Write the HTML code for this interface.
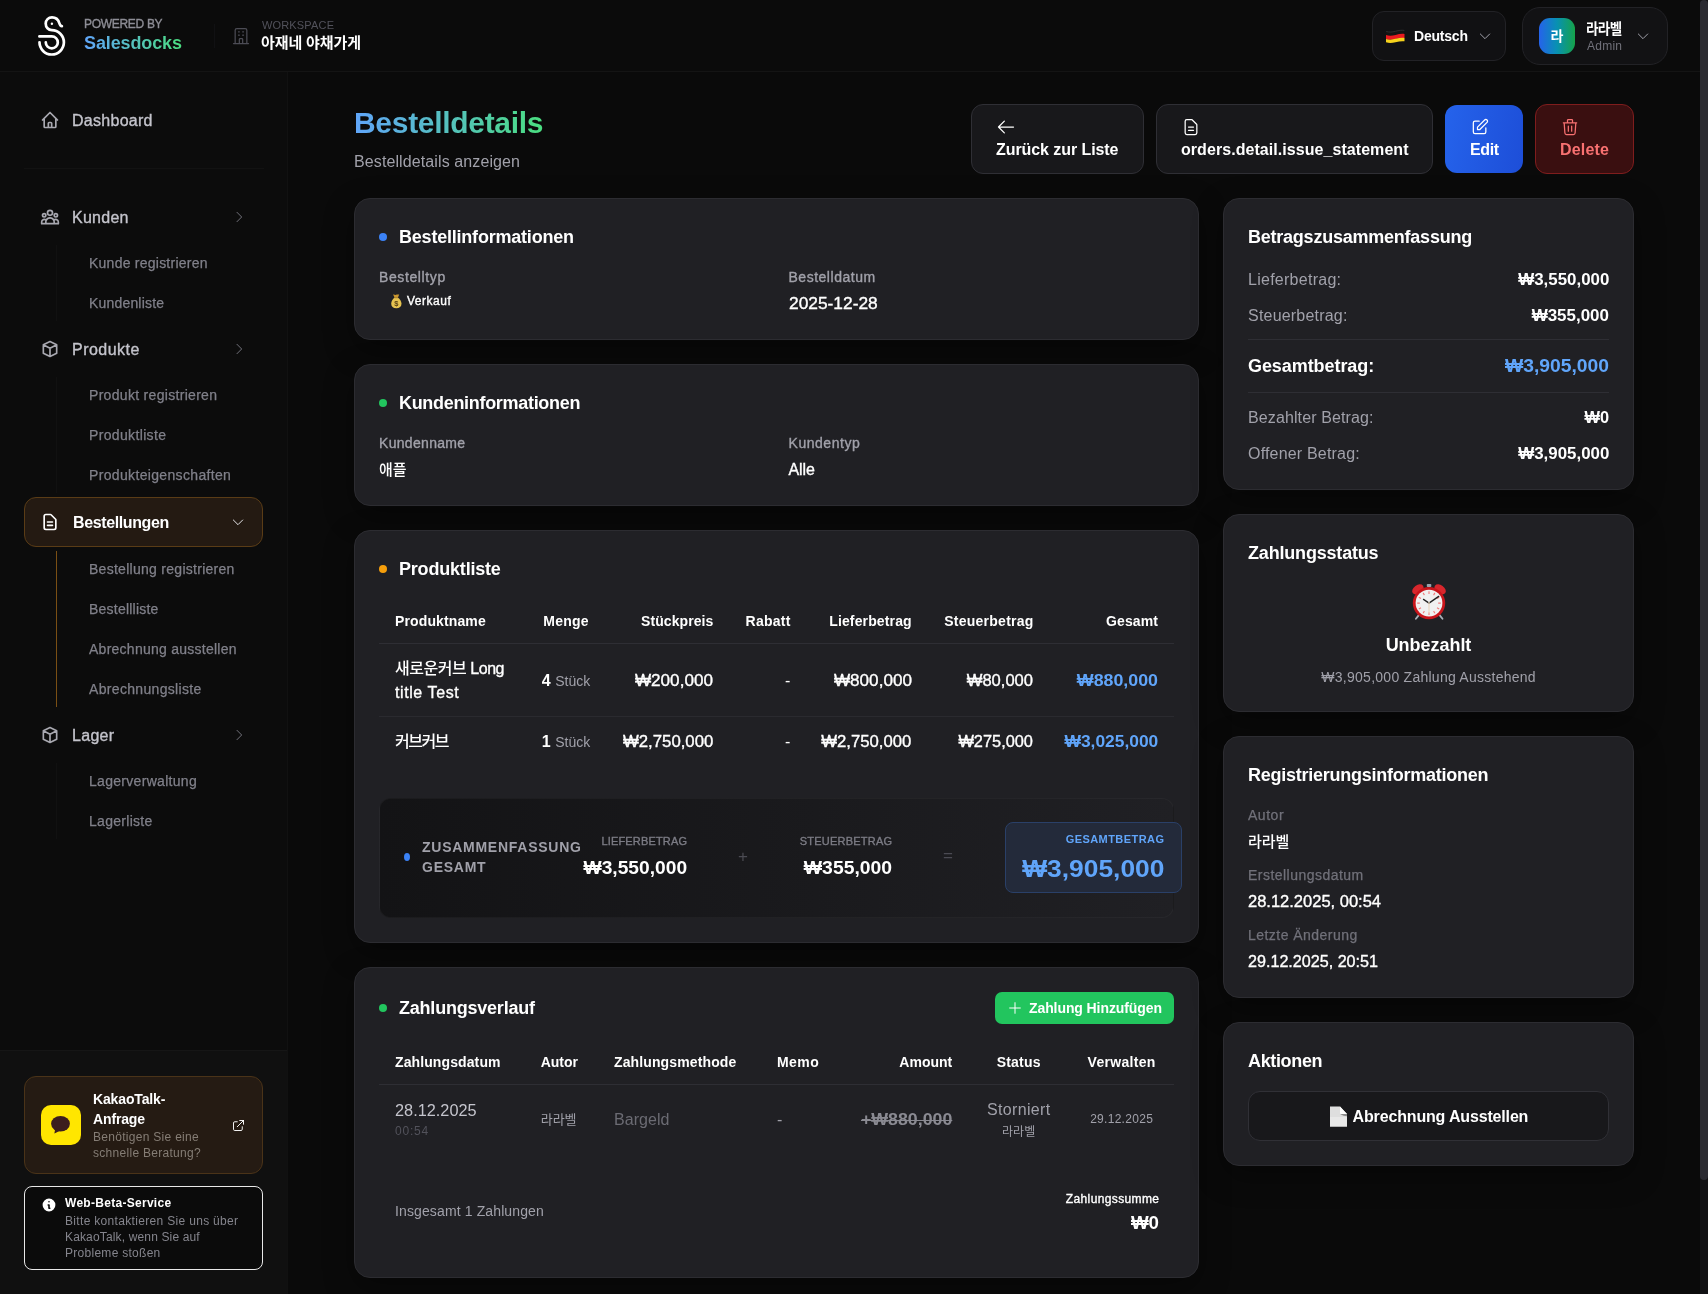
<!DOCTYPE html>
<html lang="de">
<head>
<meta charset="utf-8">
<title>Bestelldetails</title>
<style>
*{box-sizing:border-box;margin:0;padding:0}
html,body{width:1708px;height:1294px;overflow:hidden;background:#0a0a0a}
body{font-family:"Liberation Sans","Noto Sans CJK KR",sans-serif;color:#fff;position:relative;-webkit-font-smoothing:antialiased;will-change:transform}
svg{display:block}
.ico{fill:none;stroke:currentColor;stroke-width:1.5;stroke-linecap:round;stroke-linejoin:round}
b,.sb{font-weight:700}
#t_pow{letter-spacing:-0.307px !important;margin-right:0.307px;}
#t_sd{letter-spacing:-0.118px !important;margin-right:0.118px;}
#t_ws{letter-spacing:0.162px !important;margin-right:-0.162px;}
#t_wsn{letter-spacing:-0.112px !important;margin-right:0.112px;}
#t_de{letter-spacing:-0.206px !important;margin-right:0.206px;}
#t_un{letter-spacing:-0.633px !important;margin-right:0.633px;}
#t_ad{letter-spacing:0.246px !important;margin-right:-0.246px;}
#s_dash{letter-spacing:0.277px !important;margin-right:-0.277px;}
#s_kun{letter-spacing:0.266px !important;margin-right:-0.266px;}
#s_k1{letter-spacing:0.241px !important;margin-right:-0.241px;}
#s_k2{letter-spacing:0.183px !important;margin-right:-0.183px;}
#s_pro{letter-spacing:0.465px !important;margin-right:-0.465px;}
#s_p1{letter-spacing:0.307px !important;margin-right:-0.307px;}
#s_p2{letter-spacing:0.349px !important;margin-right:-0.349px;}
#s_p3{letter-spacing:0.340px !important;margin-right:-0.340px;}
#s_best{letter-spacing:-0.388px !important;margin-right:0.388px;}
#s_b1{letter-spacing:0.277px !important;margin-right:-0.277px;}
#s_b2{letter-spacing:0.225px !important;margin-right:-0.225px;}
#s_b3{letter-spacing:0.253px !important;margin-right:-0.253px;}
#s_b4{letter-spacing:0.326px !important;margin-right:-0.326px;}
#s_lag{letter-spacing:0.295px !important;margin-right:-0.295px;}
#s_l1{letter-spacing:0.299px !important;margin-right:-0.299px;}
#s_l2{letter-spacing:0.289px !important;margin-right:-0.289px;}
#s_kk{letter-spacing:-0.141px !important;}
#s_kd{letter-spacing:0.291px !important;}
#s_wb{letter-spacing:0.285px !important;margin-right:-0.285px;}
#s_wd1{letter-spacing:0.322px !important;margin-right:-0.322px;}
#s_wd2{letter-spacing:0.149px !important;margin-right:-0.149px;}
#s_wd3{letter-spacing:0.279px !important;margin-right:-0.279px;}
#m_h1{letter-spacing:-0.302px !important;margin-right:0.302px;}
#m_h2{letter-spacing:0.106px !important;margin-right:-0.106px;}
#b_1{letter-spacing:-0.072px !important;margin-right:0.072px;}
#b_2{letter-spacing:0.058px !important;margin-right:-0.058px;}
#b_3{letter-spacing:-0.406px !important;margin-right:0.406px;}
#b_4{letter-spacing:0.194px !important;margin-right:-0.194px;}
#c1_t{letter-spacing:-0.212px !important;margin-right:0.212px;}
#c1_a{letter-spacing:0.611px !important;margin-right:-0.611px;}
#c1_b{letter-spacing:0.516px !important;margin-right:-0.516px;}
#c1_c{letter-spacing:0.515px !important;margin-right:-0.515px;}
#c1_d{display:inline-block;letter-spacing:0 !important;transform:scaleX(1.0838);transform-origin:0% 50%}
#c2_t{letter-spacing:-0.311px !important;margin-right:0.311px;}
#c2_a{letter-spacing:0.311px !important;margin-right:-0.311px;}
#c2_c{letter-spacing:0.543px !important;margin-right:-0.543px;}
#c2_d{letter-spacing:-0.062px !important;margin-right:0.062px;}
#c3_t{letter-spacing:-0.194px !important;margin-right:0.194px;}
#p_h1{letter-spacing:0.123px !important;margin-right:-0.123px;}
#p_h2{letter-spacing:0.239px !important;margin-right:-0.239px;}
#p_h3{letter-spacing:0.078px !important;margin-right:-0.078px;}
#p_h4{letter-spacing:0.247px !important;margin-right:-0.247px;}
#p_h5{letter-spacing:0.143px !important;margin-right:-0.143px;}
#p_h6{letter-spacing:0.249px !important;margin-right:-0.249px;}
#p_h7{letter-spacing:0.128px !important;margin-right:-0.128px;}
#p_a1{letter-spacing:-0.462px !important;margin-right:0.462px;}
#p_a1b{letter-spacing:0.588px !important;margin-right:-0.588px;}
#p_a3{display:inline-block;letter-spacing:0 !important;transform:scaleX(1.0694);transform-origin:100% 50%}
#p_a5{display:inline-block;letter-spacing:0 !important;transform:scaleX(1.0694);transform-origin:100% 50%}
#p_a6{display:inline-block;letter-spacing:0 !important;transform:scaleX(1.0352);transform-origin:100% 50%}
#p_a7{display:inline-block;letter-spacing:0 !important;transform:scaleX(1.1119);transform-origin:100% 50%}
#p_b1{letter-spacing:-1.430px !important;margin-right:1.430px;}
#p_b3{display:inline-block;letter-spacing:0 !important;transform:scaleX(1.0466);transform-origin:100% 50%}
#p_b5{display:inline-block;letter-spacing:0 !important;transform:scaleX(1.0431);transform-origin:100% 50%}
#p_b6{display:inline-block;letter-spacing:0 !important;transform:scaleX(1.0214);transform-origin:100% 50%}
#p_b7{display:inline-block;letter-spacing:0 !important;transform:scaleX(1.0871);transform-origin:100% 50%}
#z_t{letter-spacing:0.738px !important;}
#z_l1{letter-spacing:0.168px !important;margin-right:-0.168px;}
#z_v1{display:inline-block;letter-spacing:0 !important;transform:scaleX(1.0662);transform-origin:100% 50%}
#z_l2{letter-spacing:0.213px !important;margin-right:-0.213px;}
#z_v2{display:inline-block;letter-spacing:0 !important;transform:scaleX(1.0748);transform-origin:100% 50%}
#z_l3{letter-spacing:0.436px !important;margin-right:-0.436px;}
#z_v3{display:inline-block;letter-spacing:0 !important;transform:scaleX(1.0987);transform-origin:100% 50%}
#c4_t{letter-spacing:-0.217px !important;margin-right:0.217px;}
#c4_b{letter-spacing:-0.090px !important;margin-right:0.090px;}
#q_h1{letter-spacing:0.105px !important;margin-right:-0.105px;}
#q_h2{letter-spacing:-0.032px !important;margin-right:0.032px;}
#q_h3{letter-spacing:0.124px !important;margin-right:-0.124px;}
#q_h4{letter-spacing:0.449px !important;margin-right:-0.449px;}
#q_h5{letter-spacing:0.022px !important;margin-right:-0.022px;}
#q_h6{letter-spacing:0.201px !important;margin-right:-0.201px;}
#q_h7{letter-spacing:0.303px !important;margin-right:-0.303px;}
#q_a1{display:inline-block;letter-spacing:0 !important;transform:scaleX(1.0190);transform-origin:0% 50%}
#q_a3{letter-spacing:0.057px !important;margin-right:-0.057px;}
#q_a5{display:inline-block;letter-spacing:0 !important;transform:scaleX(1.1096);transform-origin:100% 50%}
#q_a6{letter-spacing:0.341px !important;margin-right:-0.341px;}
#q_a7{letter-spacing:0.293px !important;margin-right:-0.293px;}
#q_f1{letter-spacing:0.124px !important;margin-right:-0.124px;}
#q_f2{letter-spacing:0.373px !important;margin-right:-0.373px;}
#q_f3{display:inline-block;letter-spacing:0 !important;transform:scaleX(1.0407);transform-origin:100% 50%}
#r1_t{letter-spacing:-0.232px !important;margin-right:0.232px;}
#r1_k1{letter-spacing:0.263px !important;margin-right:-0.263px;}
#r1_v1{display:inline-block;letter-spacing:0 !important;transform:scaleX(1.0547);transform-origin:100% 50%}
#r1_k2{letter-spacing:0.204px !important;margin-right:-0.204px;}
#r1_v2{display:inline-block;letter-spacing:0 !important;transform:scaleX(1.0598);transform-origin:100% 50%}
#r1_k3{letter-spacing:-0.071px !important;margin-right:0.071px;}
#r1_v3{display:inline-block;letter-spacing:0 !important;transform:scaleX(1.0723);transform-origin:100% 50%}
#r1_k4{letter-spacing:0.111px !important;margin-right:-0.111px;}
#r1_v4{display:inline-block;letter-spacing:0 !important;transform:scaleX(1.0208);transform-origin:100% 50%}
#r1_k5{letter-spacing:0.185px !important;margin-right:-0.185px;}
#r1_v5{display:inline-block;letter-spacing:0 !important;transform:scaleX(1.0547);transform-origin:100% 50%}
#r2_t{letter-spacing:-0.186px !important;margin-right:0.186px;}
#r2_a{letter-spacing:-0.039px !important;margin-right:0.039px;}
#r2_b{letter-spacing:0.259px !important;margin-right:-0.259px;}
#r3_t{letter-spacing:-0.251px !important;margin-right:0.251px;}
#r3_a{letter-spacing:0.533px !important;margin-right:-0.533px;}
#r3_b{letter-spacing:0.469px !important;margin-right:-0.469px;}
#r3_c{display:inline-block;letter-spacing:0 !important;transform:scaleX(1.0309);transform-origin:0% 50%}
#r3_d{letter-spacing:0.468px !important;margin-right:-0.468px;}
#r3_e{display:inline-block;letter-spacing:0 !important;transform:scaleX(1.0076);transform-origin:0% 50%}
#r4_t{letter-spacing:-0.345px !important;margin-right:0.345px;}
#r4_b{letter-spacing:-0.159px !important;margin-right:0.159px;}
/* header */
#hdr{position:absolute;left:0;top:0;width:1700px;height:72px;background:#0b0b0b;border-bottom:1px solid #141414}
#hdr .abs{position:absolute;white-space:nowrap}
/* sidebar */
#side{position:absolute;left:0;top:72px;width:288px;height:1222px;background:#0c0c0c;border-right:1px solid #111}
#side .it{position:absolute;left:24px;width:239px;height:50px;display:flex;align-items:center;color:#c4c4cc;font-size:16px;border-radius:12px;border:1px solid transparent}
#side .it svg.mi{position:absolute;left:15px;top:14px;width:20px;height:20px;stroke-width:2;color:#a8a8b0}
#side .it .t{position:absolute;left:47px;top:0;line-height:50px;white-space:nowrap}
#side .it svg.ch{position:absolute;left:205.5px;top:16px;width:16px;height:16px;color:#71717a}
#side .sub{position:absolute;left:89px;font-size:14px;line-height:20px;color:#80808a;white-space:nowrap;font-weight:500;-webkit-text-stroke:.25px currentColor}
#side .vl{position:absolute;left:56px;width:1px;background:#111}
/* scrollbar */
#sbt{position:absolute;left:1700px;top:0;width:8px;height:1294px;background:#121214}
#sbh{position:absolute;left:1700px;top:0;width:8px;height:1180px;background:#2b2b31;border-radius:4px}
/* main */
.card{position:absolute;background:#202024;border:1px solid #2c2c31;border-radius:16px;padding:24px;box-shadow:0 10px 30px rgba(0,0,0,.35)}
.ct{font-size:18px;line-height:28px;font-weight:700;white-space:nowrap;display:flex;align-items:center}
.dot{width:8px;height:8px;border-radius:50%;margin-right:12px;flex:none}
.lbl{font-size:14px;line-height:20px;color:#a1a1aa;white-space:nowrap}
.val{font-size:16px;line-height:24px;margin-top:4px;white-space:nowrap;position:relative;top:1px}
.row{display:flex;justify-content:space-between;align-items:center;font-size:16px;line-height:24px;white-space:nowrap}
.row .k{color:#a1a1aa}
.row.n span{position:relative;top:1px}
.ko{font-weight:500;font-size:15px}
.ml{font-weight:500;-webkit-text-stroke:.25px currentColor}
.md{font-weight:500;-webkit-text-stroke:.35px currentColor}
.row .v{font-weight:700}
table{border-collapse:collapse;table-layout:fixed;width:795px}
th{font-size:14px;line-height:20px;font-weight:700;padding:12px 16px;text-align:left;white-space:nowrap;border-bottom:1px solid #2e2e34}
td{font-size:16px;line-height:24px;padding:13px 16px 11px;white-space:nowrap}
.r{text-align:right}.c{text-align:center}
.blue{color:#60a5fa}
.btn{position:absolute;top:104px;height:70px;border-radius:12px;border:1px solid #2f2f35;background:#18181b;font-size:16px;font-weight:700;line-height:24px;white-space:nowrap}
.btn svg{position:absolute;left:24px;top:12px;width:20px;height:20px}
.btn span{position:absolute;left:24px;top:33px}
</style>
</head>
<body>
<div id="hdr">
 <svg class="abs" style="left:0;top:0" width="80" height="72" viewBox="0 0 80 72" fill="none" stroke="#fff" stroke-width="2.700" stroke-linecap="round" stroke-linejoin="round">
  <path d="M61.900 26.200C60.300 26.100 59.700 24.400 59.200 22.800C58.2 19.5 55.5 17.3 52 17.3A6.3 6.3 0 0 0 45.7 23.6C45.7 27.5 48.5 30.1 51.7 30.1A12.2 12.2 0 1 1 39.5 42.3"/>
  <path d="M39.400 36.400H51.800A6 6 0 1 1 45.8 42.4"/>
  <circle cx="51.9" cy="23.8" r="1.2" fill="#fff" stroke="none"/>
 </svg>
 <div id="t_pow" class="abs md" style="left:84px;top:16px;font-size:12px;line-height:16px;color:#8e8e96;letter-spacing:.3px">POWERED BY</div>
 <div class="abs" id="t_sd" style="left:84px;top:28.500px;font-size:18px;line-height:28px;font-weight:700;background:linear-gradient(90deg,#60a5fa,#4ade80);-webkit-background-clip:text;background-clip:text;color:transparent">Salesdocks</div>
 <div class="abs" style="left:214px;top:24px;width:1px;height:24px;background:#111113"></div>
 <svg class="abs ico" style="left:231px;top:26px;color:#4c4c55" width="20" height="20" viewBox="0 0 24 24" stroke-width="2"><path d="M19 21V5a2 2 0 00-2-2H7a2 2 0 00-2 2v16m14 0h2m-2 0h-5m-9 0H3m2 0h5M9 7h1m-1 4h1m4-4h1m-1 4h1m-5 10v-5a1 1 0 011-1h2a1 1 0 011 1v5m-4 0h4"/></svg>
 <div class="abs" id="t_ws" style="left:262px;top:17px;font-size:11px;line-height:16px;color:#52525b;letter-spacing:.6px">WORKSPACE</div>
 <div class="abs" id="t_wsn" style="left:261px;top:31px;font-size:15px;line-height:24px;font-weight:700">아재네 야채가게</div>

 <div class="abs" style="left:1372px;top:11px;width:134px;height:50px;border-radius:12px;background:#111113;border:1px solid #222226"></div>
 <svg class="abs" style="left:1385px;top:28.600px" width="21" height="15" preserveAspectRatio="none" viewBox="0 0 21 16"><path d="M1 2.300C4 3.400 7 3.200 10.500 2.200S17 .8 19.500 1.200V5.500C17 5.100 14 5.500 10.500 6.500S4 7.700 1 6.600Z" fill="#141414"/><path d="M1.200 2.600C4 3.600 7 3.400 10.500 2.400S17 1.100 19.300 1.500" stroke="#3a3a3a" stroke-width=".7" fill="none"/><path d="M1 6.400C4 7.500 7 7.300 10.500 6.300S17 4.900 19.500 5.300V9.700C17 9.300 14 9.700 10.500 10.700S4 11.900 1 10.800Z" fill="#ea1a1f"/><path d="M1 10.600C4 11.700 7 11.500 10.500 10.500S17 9.100 19.500 9.500V13.100C17 12.700 14 13.100 10.500 14.100S4 15.300 1 14.200Z" fill="#f6d21c"/></svg>
 <div class="abs" id="t_de" style="left:1414px;top:24px;font-size:14px;line-height:24px;font-weight:700">Deutsch</div>
 <svg class="abs ico" style="left:1477px;top:28px;color:#a1a1aa" width="16" height="16" viewBox="0 0 24 24" stroke-width="2"><path d="M19 9l-7 7-7-7"/></svg>

 <div class="abs" style="left:1522px;top:7px;width:146px;height:58px;border-radius:18px;background:#121214;border:1px solid #222226"></div>
 <div class="abs" style="left:1539px;top:18px;width:36px;height:36px;border-radius:11px;background:linear-gradient(90deg,#2563eb,#0891b2 50%,#16a34a);font-size:14px;line-height:36px;font-weight:700;text-align:center">라</div>
 <div class="abs" id="t_un" style="left:1586px;top:18.500px;font-size:15px;transform:scaleX(.9);transform-origin:0 0;line-height:20px;font-weight:700">라라벨</div>
 <div class="abs" id="t_ad" style="left:1587px;top:38px;font-size:12px;line-height:16px;color:#71717a">Admin</div>
 <svg class="abs ico" style="left:1634.500px;top:28px;color:#a1a1aa" width="16" height="16" viewBox="0 0 24 24" stroke-width="2"><path d="M19 9l-7 7-7-7"/></svg>
</div>

<div id="side">
 <div class="it" style="top:23px"><svg class="mi ico" viewBox="0 0 24 24"><path d="M3 12l2-2m0 0l7-7 7 7M5 10v10a1 1 0 001 1h3m10-11l2 2m-2-2v10a1 1 0 01-1 1h-3m-6 0a1 1 0 001-1v-4a1 1 0 011-1h2a1 1 0 011 1v4a1 1 0 001 1m-6 0h6"/></svg><span class="t md" id="s_dash">Dashboard</span></div>
 <div style="position:absolute;left:24px;top:96px;width:240px;height:1px;background:#121212"></div>

 <div class="it" style="top:120px"><svg class="mi ico" viewBox="0 0 24 24"><path d="M17 20h5v-2a3 3 0 00-5.356-1.857M17 20H7m10 0v-2c0-.656-.126-1.283-.356-1.857M7 20H2v-2a3 3 0 015.356-1.857M7 20v-2c0-.656.126-1.283.356-1.857m0 0a5.002 5.002 0 019.288 0M15 7a3 3 0 11-6 0 3 3 0 016 0zm6 3a2 2 0 11-4 0 2 2 0 014 0zM7 10a2 2 0 11-4 0 2 2 0 014 0z"/></svg><span class="t md" id="s_kun">Kunden</span><svg class="ch ico" viewBox="0 0 24 24" stroke-width="2"><path d="M9 5l7 7-7 7"/></svg></div>
 <div class="vl" style="top:173px;height:76px"></div>
 <div class="sub" id="s_k1" style="top:181px">Kunde registrieren</div>
 <div class="sub" id="s_k2" style="top:221px">Kundenliste</div>

 <div class="it" style="top:252px"><svg class="mi ico" viewBox="0 0 24 24"><path d="M20 7l-8-4-8 4m16 0l-8 4m8-4v10l-8 4m0-10L4 7m8 4v10M4 7v10l8 4"/></svg><span class="t md" id="s_pro">Produkte</span><svg class="ch ico" viewBox="0 0 24 24" stroke-width="2"><path d="M9 5l7 7-7 7"/></svg></div>
 <div class="vl" style="top:305px;height:116px"></div>
 <div class="sub" id="s_p1" style="top:313px">Produkt registrieren</div>
 <div class="sub" id="s_p2" style="top:353px">Produktliste</div>
 <div class="sub" id="s_p3" style="top:393px">Produkteigenschaften</div>

 <div class="it" style="top:425px;background:#241a12;border-color:#5a3c16;color:#fff"><svg class="mi ico" style="left:15.400px;color:#fff" viewBox="0 0 24 24"><path d="M9 12h6m-6 4h6m2 5H7a2 2 0 01-2-2V5a2 2 0 012-2h5.586a1 1 0 01.707.293l5.414 5.414a1 1 0 01.293.707V19a2 2 0 01-2 2z"/></svg><span class="t sb" id="s_best" style="left:48px">Bestellungen</span><svg class="ch ico" style="color:#e4e4e7;left:204.500px" viewBox="0 0 24 24" stroke-width="2"><path d="M19 9l-7 7-7-7"/></svg></div>
 <div style="position:absolute;left:56px;top:479px;width:1px;height:156px;background:#7a4f14"></div>
 <div class="sub" id="s_b1" style="top:487px">Bestellung registrieren</div>
 <div class="sub" id="s_b2" style="top:527px">Bestellliste</div>
 <div class="sub" id="s_b3" style="top:567px">Abrechnung ausstellen</div>
 <div class="sub" id="s_b4" style="top:607px">Abrechnungsliste</div>

 <div class="it" style="top:638px"><svg class="mi ico" viewBox="0 0 24 24"><path d="M20 7l-8-4-8 4m16 0l-8 4m8-4v10l-8 4m0-10L4 7m8 4v10M4 7v10l8 4"/></svg><span class="t md" id="s_lag">Lager</span><svg class="ch ico" viewBox="0 0 24 24" stroke-width="2"><path d="M9 5l7 7-7 7"/></svg></div>
 <div class="vl" style="top:691px;height:76px"></div>
 <div class="sub" id="s_l1" style="top:699px">Lagerverwaltung</div>
 <div class="sub" id="s_l2" style="top:739px">Lagerliste</div>

 <div style="position:absolute;left:0;top:978px;width:287px;height:244px;background:#101010;border-top:1px solid #161616"></div>
 <div style="position:absolute;left:24px;top:1004px;width:239px;height:98px;border-radius:12px;background:#251b13;border:1px solid #4a3318"></div>
 <div style="position:absolute;left:41px;top:1033px;width:40px;height:40px;border-radius:10px;background:#ffe600"></div>
 <svg style="position:absolute;left:41px;top:1033px" width="40" height="40" viewBox="0 0 40 40"><ellipse cx="19.500" cy="18.800" rx="9.400" ry="7.700" fill="#3c1e1e"/><path d="M14.200 23.500 13.400 28.600 19 25.800Z" fill="#3c1e1e"/></svg>
 <div id="s_kk" style="position:absolute;left:93px;top:1017px;font-size:14px;line-height:20px;font-weight:700"><span id="s_kk1">KakaoTalk-</span><br>Anfrage</div>
 <div id="s_kd" style="position:absolute;left:93px;top:1057px;font-size:12px;line-height:16px;color:#857d75;white-space:nowrap">Benötigen Sie eine<br><span id="s_kd2">schnelle Beratung?</span></div>
 <svg class="ico" style="position:absolute;left:230.500px;top:1045.500px;color:#fff" width="15" height="15" viewBox="0 0 24 24" stroke-width="2.400"><path d="M10 6H6a2 2 0 00-2 2v10a2 2 0 002 2h10a2 2 0 002-2v-4M14 4h6m0 0v6m0-6L10 14"/></svg>

 <div style="position:absolute;left:24px;top:1114px;width:239px;height:84px;border-radius:8px;background:#0b0b0b;border:1px solid #e8e8e8"></div>
 <svg style="position:absolute;left:41px;top:1125px" width="16" height="16" viewBox="0 0 20 20"><path fill="#fff" fill-rule="evenodd" d="M18 10a8 8 0 11-16 0 8 8 0 0116 0zm-7-4a1 1 0 11-2 0 1 1 0 012 0zM9 9a1 1 0 000 2v3a1 1 0 001 1h1a1 1 0 100-2v-3a1 1 0 00-1-1H9z"/></svg>
 <div id="s_wb" style="position:absolute;left:65px;top:1123px;font-size:12px;line-height:16px;font-weight:700;white-space:nowrap">Web-Beta-Service</div>
 <div id="s_wd" style="position:absolute;left:65px;top:1141px;font-size:12px;line-height:16px;color:#85858d;white-space:nowrap"><span id="s_wd1">Bitte kontaktieren Sie uns über</span><br><span id="s_wd2">KakaoTalk, wenn Sie auf</span><br><span id="s_wd3">Probleme stoßen</span></div>
</div>

<div id="main">
 <div id="m_h1" style="position:absolute;left:354px;top:103px;font-size:30px;line-height:40px;font-weight:700;white-space:nowrap;background:linear-gradient(90deg,#60a5fa,#4ade80);-webkit-background-clip:text;background-clip:text;color:transparent">Bestelldetails</div>
 <div id="m_h2" style="position:absolute;left:354px;top:150px;font-size:16px;line-height:24px;color:#a1a1aa;white-space:nowrap">Bestelldetails anzeigen</div>

 <div class="btn" style="left:971px;width:173px"><svg class="ico" viewBox="0 0 24 24" stroke-width="2"><path d="M10 19l-7-7m0 0l7-7m-7 7h18"/></svg><span id="b_1">Zurück zur Liste</span></div>
 <div class="btn" style="left:1156px;width:277px"><svg class="ico" viewBox="0 0 24 24" stroke-width="2"><path d="M9 12h6m-6 4h6m2 5H7a2 2 0 01-2-2V5a2 2 0 012-2h5.586a1 1 0 01.707.293l5.414 5.414a1 1 0 01.293.707V19a2 2 0 01-2 2z"/></svg><span id="b_2">orders.detail.issue_statement</span></div>
 <div class="btn" style="left:1445px;width:78px;top:105px;height:68px;border:0;background:linear-gradient(100deg,#2563eb,#1d4ed8)"><svg class="ico" style="left:25px" viewBox="0 0 24 24" stroke-width="2"><path d="M11 5H6a2 2 0 00-2 2v11a2 2 0 002 2h11a2 2 0 002-2v-5m-1.414-9.414a2 2 0 112.828 2.828L11.828 15H9v-2.828l8.586-8.586z"/></svg><span id="b_3" style="left:25px">Edit</span></div>
 <div class="btn" style="left:1535px;width:99px;background:#3a0f10;border-color:#7f1d1d;color:#f87171"><svg class="ico" viewBox="0 0 24 24" stroke-width="2"><path d="M19 7l-.867 12.142A2 2 0 0116.138 21H7.862a2 2 0 01-1.995-1.858L5 7m5 4v6m4-6v6m1-10V4a1 1 0 00-1-1h-4a1 1 0 00-1 1v3M4 7h16"/></svg><span id="b_4">Delete</span></div>

 <!-- left col -->
 <div class="card" style="left:354px;top:198px;width:845px;height:142px">
  <div class="ct"><i class="dot" style="background:#3b82f6"></i><span id="c1_t">Bestellinformationen</span></div>
  <div style="display:flex;gap:24px;margin-top:16px">
   <div style="width:385.5px"><div class="lbl md" id="c1_a">Bestelltyp</div><div style="margin-top:4px;padding-left:12px;font-size:12px;line-height:16px;display:flex;align-items:center;height:20px"><svg width="11" height="15" viewBox="0 0 11 15" style="margin-right:5px;position:relative;top:0"><path d="M2.100.6c1-.3 1.600.3 2.200.3S5.400.5 6 .6s1.400-.2 2.200 0L6.900 3.700H3.600Z" fill="#c9962f"/><path d="M3.700 3.500h3.100c2.100 1.300 3.700 3.700 3.700 6.300 0 2.900-2 4.500-5.200 4.500S.2 12.700.2 9.800c0-2.600 1.500-5 3.500-6.300Z" fill="#e6c350"/><path d="M3.500 3.400h3.500v.8H3.500Z" fill="#a8741f"/><text x="5.300" y="12" font-size="7.500" font-weight="700" text-anchor="middle" fill="#5b4316" font-family="Liberation Sans,sans-serif">$</text></svg><span id="c1_b" class="md">Verkauf</span></div></div>
   <div><div class="lbl md" id="c1_c">Bestelldatum</div><div class="val md" id="c1_d">2025-12-28</div></div>
  </div>
 </div>

 <div class="card" style="left:354px;top:364px;width:845px;height:142px">
  <div class="ct"><i class="dot" style="background:#22c55e"></i><span id="c2_t">Kundeninformationen</span></div>
  <div style="display:flex;gap:24px;margin-top:16px">
   <div style="width:385.5px"><div class="lbl md" id="c2_a">Kundenname</div><div class="val ko">애플</div></div>
   <div><div class="lbl md" id="c2_c">Kundentyp</div><div class="val md" id="c2_d">Alle</div></div>
  </div>
 </div>

 <div class="card" style="left:354px;top:530px;width:845px;height:413px">
  <div class="ct"><i class="dot" style="background:#f59e0b"></i><span id="c3_t">Produktliste</span></div>
  <table style="margin-top:16px">
   <colgroup><col style="width:146px"><col style="width:82px"><col style="width:122.400px"><col style="width:77px"><col style="width:121.300px"><col style="width:121.700px"><col style="width:124.600px"></colgroup>
   <tr><th><span id="p_h1">Produktname</span></th><th class="c"><span id="p_h2">Menge</span></th><th class="r"><span id="p_h3">Stückpreis</span></th><th class="r"><span id="p_h4">Rabatt</span></th><th class="r"><span id="p_h5">Lieferbetrag</span></th><th class="r"><span id="p_h6">Steuerbetrag</span></th><th class="r"><span id="p_h7">Gesamt</span></th></tr>
   <tr style="border-bottom:1px solid #2a2a2f"><td class="md" style="white-space:normal"><span id="p_a1"><span style="-webkit-text-stroke:0">새로운커브</span> Long</span><br><span id="p_a1b">title Test</span></td><td class="c"><span class="sb">4</span> <span style="font-size:14px;color:#a1a1aa">Stück</span></td><td class="r md"><span id="p_a3">₩200,000</span></td><td class="r">-</td><td class="r md"><span id="p_a5">₩800,000</span></td><td class="r md"><span id="p_a6">₩80,000</span></td><td class="r blue sb"><span id="p_a7">₩880,000</span></td></tr>
   <tr><td class="md"><span id="p_b1" style="-webkit-text-stroke:0">커브커브</span></td><td class="c"><span class="sb">1</span> <span style="font-size:14px;color:#a1a1aa">Stück</span></td><td class="r md"><span id="p_b3">₩2,750,000</span></td><td class="r">-</td><td class="r md"><span id="p_b5">₩2,750,000</span></td><td class="r md"><span id="p_b6">₩275,000</span></td><td class="r blue sb"><span id="p_b7">₩3,025,000</span></td></tr>
  </table>
  <div style="position:absolute;left:24px;top:267px;width:795px;height:120px;border-radius:12px;background:linear-gradient(90deg,#131315,#1a1a1d 55%,#202024);border:1px solid rgba(255,255,255,.035)"></div>
  <div style="position:absolute;left:49px;top:322px;width:6px;height:8px;border-radius:50%;background:#3b82f6"></div>
  <div id="z_t" style="position:absolute;left:67px;top:306px;font-size:14px;line-height:20px;font-weight:700;color:#a1a1aa;letter-spacing:.7px;white-space:nowrap"><span id="z_t1">ZUSAMMENFASSUNG</span><br>GESAMT</div>
  <div id="z_l1" class="md" style="position:absolute;right:511px;top:302px;font-size:11px;line-height:16px;color:#7c7c85;letter-spacing:.8px;white-space:nowrap">LIEFERBETRAG</div>
  <div id="z_v1" style="position:absolute;right:511px;top:323px;font-size:18px;line-height:28px;font-weight:700;white-space:nowrap">₩3,550,000</div>
  <div style="position:absolute;left:383px;top:314px;font-size:17px;line-height:24px;color:#4b4b53">+</div>
  <div id="z_l2" class="md" style="position:absolute;right:306px;top:302px;font-size:11px;line-height:16px;color:#7c7c85;letter-spacing:.8px;white-space:nowrap">STEUERBETRAG</div>
  <div id="z_v2" style="position:absolute;right:306px;top:323px;font-size:18px;line-height:28px;font-weight:700;white-space:nowrap">₩355,000</div>
  <div style="position:absolute;left:588px;top:313px;font-size:17px;line-height:24px;color:#4b4b53">=</div>
  <div style="position:absolute;left:650px;top:291px;width:177px;height:71px;border-radius:8px;background:#232a3a;border:1px solid #2a4068"></div>
  <div id="z_l3" style="position:absolute;right:34px;top:300px;font-size:11px;line-height:16px;font-weight:700;color:#60a5fa;letter-spacing:.8px;white-space:nowrap">GESAMTBETRAG</div>
  <div id="z_v3" style="position:absolute;right:34px;top:322px;font-size:24px;line-height:32px;font-weight:700;color:#60a5fa;white-space:nowrap">₩3,905,000</div>
 </div>

 <div class="card" style="left:354px;top:967px;width:845px;height:311px">
  <div class="ct" style="height:32px"><i class="dot" style="background:#22c55e"></i><span id="c4_t">Zahlungsverlauf</span></div>
  <div style="position:absolute;left:640px;top:24px;width:179px;height:32px;border-radius:7px;background:#22c55e"></div>
  <svg class="ico" style="position:absolute;left:652px;top:32px;color:#fff" width="16" height="16" viewBox="0 0 24 24" stroke-width="2.900"><path d="M12 4v16m8-8H4"/></svg>
  <div id="c4_b" style="position:absolute;left:674px;top:30px;font-size:14px;line-height:20px;font-weight:700;white-space:nowrap">Zahlung Hinzufügen</div>
  <table style="margin-top:16px">
   <colgroup><col style="width:145.700px"><col style="width:73.300px"><col style="width:163px"><col style="width:74px"><col style="width:133.300px"><col style="width:100.700px"><col style="width:105px"></colgroup>
   <tr><th><span id="q_h1">Zahlungsdatum</span></th><th><span id="q_h2">Autor</span></th><th><span id="q_h3">Zahlungsmethode</span></th><th><span id="q_h4">Memo</span></th><th class="r"><span id="q_h5">Amount</span></th><th class="c"><span id="q_h6">Status</span></th><th class="c"><span id="q_h7">Verwalten</span></th></tr>
   <tr style="color:#a1a1aa"><td style="padding-top:14px;padding-bottom:14px"><div id="q_a1" style="color:#c4c4cc">28.12.2025</div><div style="font-size:12px;line-height:16px;color:#52525b;letter-spacing:.8px">00:54</div></td><td style="font-size:13px;color:#a1a1aa">라라벨</td><td style="color:#6b6b73"><span id="q_a3">Bargeld</span></td><td style="color:#a1a1aa">-</td><td class="r sb" style="color:#8a8a92"><span id="q_a5" style="text-decoration:line-through">+₩880,000</span></td><td class="c" style="padding-top:11px;padding-bottom:9px"><div id="q_a6" style="line-height:24px">Storniert</div><div style="font-size:12px;line-height:20px;position:relative;top:0">라라벨</div></td><td class="c" style="font-size:12px;padding-top:12px;padding-bottom:12px"><span id="q_a7">29.12.2025</span></td></tr>
  </table>
  <div id="q_f1" style="position:absolute;left:40px;top:233px;font-size:14px;line-height:20px;color:#a1a1aa;white-space:nowrap">Insgesamt 1 Zahlungen</div>
  <div id="q_f2" style="position:absolute;right:39px;top:223px;font-size:12px;line-height:16px;white-space:nowrap" class="md">Zahlungssumme</div>
  <div id="q_f3" style="position:absolute;right:39px;top:241px;font-size:18px;line-height:28px;font-weight:700;white-space:nowrap">₩0</div>
 </div>

 <!-- right col -->
 <div class="card" style="left:1223px;top:198px;width:411px;height:292px">
  <div class="ct"><span id="r1_t">Betragszusammenfassung</span></div>
  <div class="row n" style="margin-top:16px"><span class="k" id="r1_k1">Lieferbetrag:</span><span class="v" id="r1_v1">₩3,550,000</span></div>
  <div class="row n" style="margin-top:12px"><span class="k" id="r1_k2">Steuerbetrag:</span><span class="v" id="r1_v2">₩355,000</span></div>
  <div class="row" style="margin-top:12px;border-top:1px solid #2e2e34;padding-top:12px;font-size:18px;line-height:28px;font-weight:700"><span id="r1_k3">Gesamtbetrag:</span><span class="blue" id="r1_v3">₩3,905,000</span></div>
  <div class="row n" style="margin-top:12px;border-top:1px solid #2e2e34;padding-top:12px"><span class="k" id="r1_k4">Bezahlter Betrag:</span><span class="v" id="r1_v4">₩0</span></div>
  <div class="row n" style="margin-top:12px"><span class="k" id="r1_k5">Offener Betrag:</span><span class="v" id="r1_v5">₩3,905,000</span></div>
 </div>

 <div class="card" style="left:1223px;top:514px;width:411px;height:198px">
  <div class="ct"><span id="r2_t">Zahlungsstatus</span></div>
  <svg style="position:absolute;left:183px;top:66px" width="44" height="44" viewBox="0 0 44 44">
   <path d="M11.800 34.100 8.900 37.800M32.600 34.100l2.900 3.700" stroke="#a9b0b8" stroke-width="1.800" stroke-linecap="round"/>
   <rect x="19.800" y="3" width="4.500" height="3" rx=".8" fill="#9aa3ad"/>
   <ellipse cx="10.900" cy="8.400" rx="6.300" ry="4.300" transform="rotate(-35 10.900 8.400)" fill="#d8262c"/>
   <ellipse cx="33.100" cy="8.400" rx="6.300" ry="4.300" transform="rotate(35 33.100 8.400)" fill="#d8262c"/>
   <circle cx="22" cy="22.100" r="16.200" fill="#c9151b"/>
   <circle cx="22" cy="22.100" r="13.400" fill="#f1f1f1"/>
   <g stroke="#f07c7c" stroke-width="1.100"><path d="M22 10.300v2.600M22 31.300v2.600M10.200 22.100h2.600M31.200 22.100h2.600M16.100 11.900l1.300 2.200M26.600 30.100l1.300 2.200M27.900 11.900l-1.300 2.200M17.400 30.100l-1.300 2.200M11.800 16.200l2.200 1.300M30 26.700l2.200 1.300M32.200 16.200l-2.200 1.300M14 26.700l-2.200 1.300"/></g>
   <path d="M22 22.100v9.900" stroke="#ead7c0" stroke-width="1.100" stroke-linecap="round"/>
   <path d="M22 22.100 16.500 18.400M22 22.100l9.700-6.700" stroke="#222" stroke-width="1.300" stroke-linecap="round"/>
   <circle cx="22" cy="22.100" r="1" fill="#cdbfa8"/>
  </svg>
  <div id="r2_a" style="margin-top:64px;text-align:center;font-size:18px;line-height:28px;font-weight:700">Unbezahlt</div>
  <div style="margin-top:8px;text-align:center;font-size:14px;line-height:20px;color:#a1a1aa;white-space:nowrap"><span id="r2_b">₩3,905,000 Zahlung Ausstehend</span></div>
 </div>

 <div class="card" style="left:1223px;top:736px;width:411px;height:262px">
  <div class="ct"><span id="r3_t">Registrierungsinformationen</span></div>
  <div class="lbl ml" style="margin-top:16px;color:#71717a"><span id="r3_a">Autor</span></div><div class="val ko">라라벨</div>
  <div class="lbl ml" style="margin-top:12px;color:#71717a"><span id="r3_b">Erstellungsdatum</span></div><div class="val md"><span id="r3_c">28.12.2025, 00:54</span></div>
  <div class="lbl ml" style="margin-top:12px;color:#71717a"><span id="r3_d">Letzte Änderung</span></div><div class="val md"><span id="r3_e">29.12.2025, 20:51</span></div>
 </div>

 <div class="card" style="left:1223px;top:1022px;width:411px;height:144px">
  <div class="ct"><span id="r4_t">Aktionen</span></div>
  <div style="margin-top:16px;height:50px;border-radius:12px;background:#18181b;border:1px solid #303036;display:flex;align-items:center;justify-content:center;font-size:16px;font-weight:700;line-height:24px;white-space:nowrap"><svg width="19" height="21" viewBox="0 0 19 21" style="margin-right:5px"><path d="M1 .5h10L18 8v12.500H1Z" fill="#dedede"/><path d="M1 11h17v9.500H1Z" fill="#e8e8e8"/><path d="M11 .5 18 8H12.500C11.500 8 11 7.500 11 6.500Z" fill="#fff"/><path d="M11.200 8h6.800v2.200c-2-.2-4.500-.4-6.800-2.200Z" fill="#8a8a8a"/></svg><span id="r4_b" style="position:relative;top:1px">Abrechnung Ausstellen</span></div>
 </div>
</div>

<div id="sbt"></div><div id="sbh"></div>
</body>
</html>
